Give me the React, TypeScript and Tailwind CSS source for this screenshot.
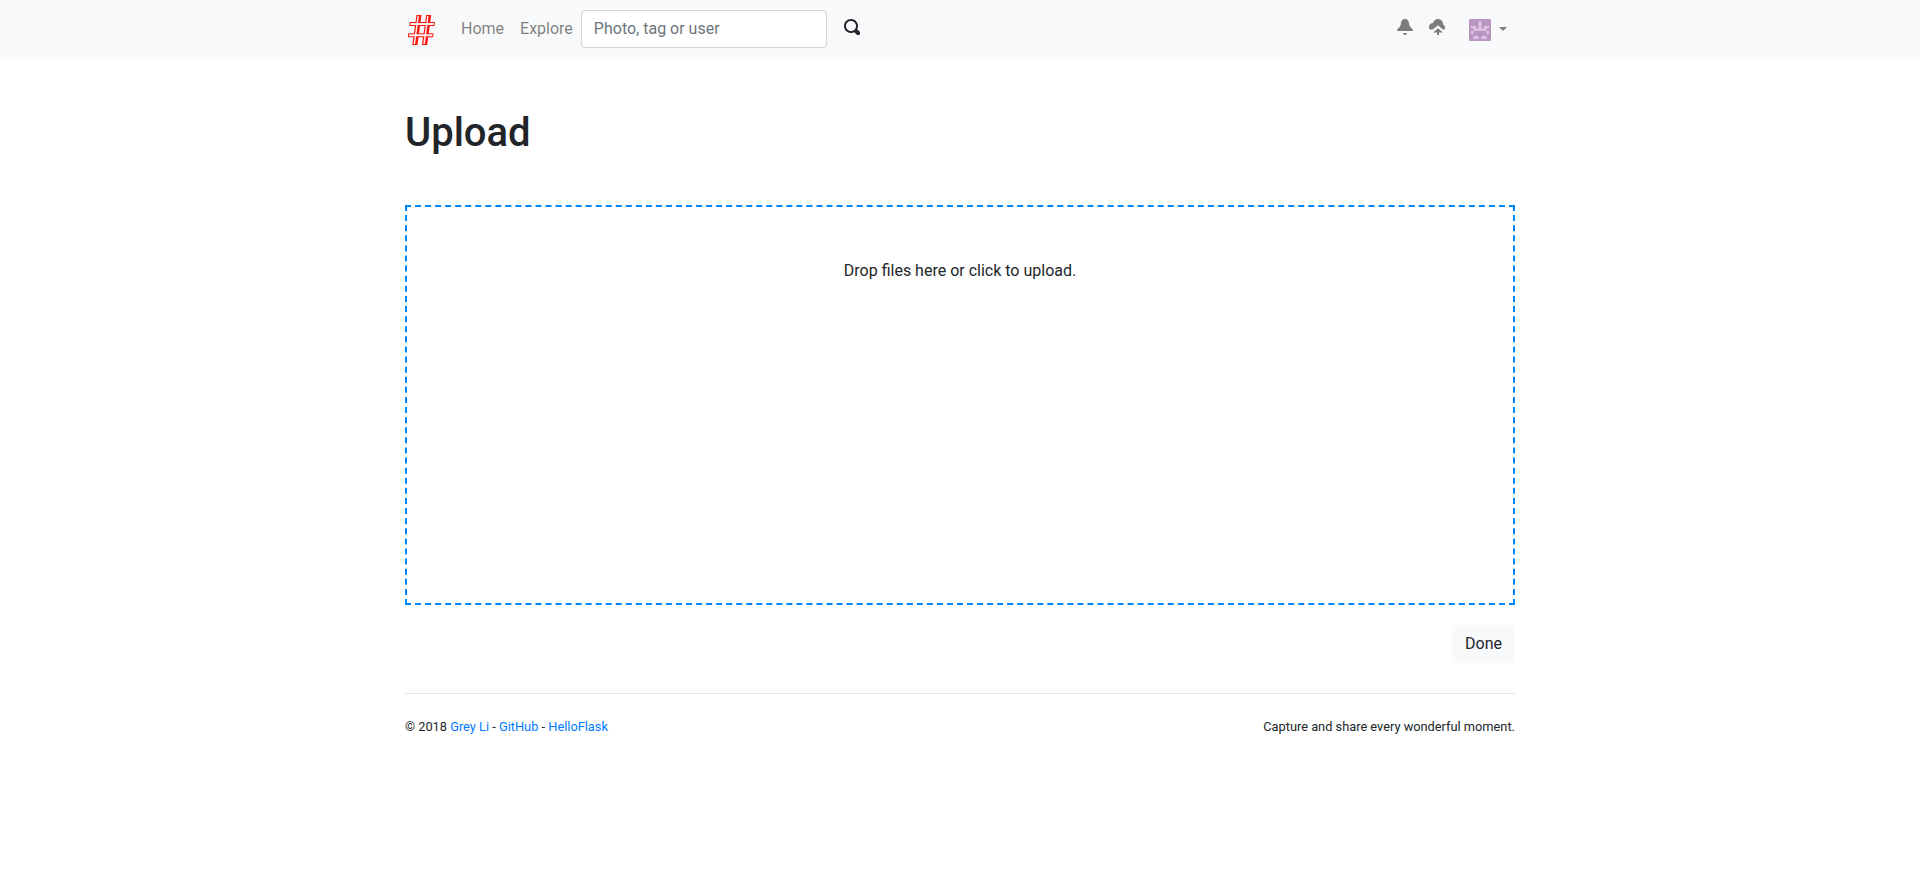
import React from "react";

const OI = {
  search:
    "M3.5 0c-1.93 0-3.5 1.57-3.5 3.5s1.57 3.5 3.5 3.5c.59 0 1.17-.14 1.66-.41a1 1 0 0 0 .13.13l1 1a1.02 1.02 0 1 0 1.44-1.44l-1-1a1 1 0 0 0-.16-.13c.27-.49.44-1.06.44-1.66 0-1.93-1.55-3.5-3.5-3.5zm0 1c1.39 0 2.5 1.11 2.5 2.5 0 .66-.24 1.27-.66 1.72l-.03.03a1 1 0 0 0-.13.13c-.44.4-1.04.63-1.69.63-1.39 0-2.5-1.11-2.5-2.5s1.11-2.5 2.5-2.5z",
  bell: "M4 0c-1.1 0-2 .9-2 2 0 1.04-.52 1.98-1.34 2.66-.41.34-.66.82-.66 1.34h8c0-.52-.24-1-.66-1.34-.82-.68-1.34-1.62-1.34-2.66 0-1.1-.89-2-2-2zm-1 7c0 .55.45 1 1 1s1-.45 1-1h-2z",
  cloud:
    "M4.5 0c-1.21 0-2.27.86-2.5 2-1.1 0-2 .9-2 2 0 .45.15.85.4 1.2h1.4l2.7-2.1 2.4 2.1h.7c.25-.2.4-.5.4-.95 0-.65-.42-1.29-1-1.5v-.25c0-1.38-1.12-2.5-2.5-2.5zm0 4.6l-2.4 2.2h1.900v1.200h1v-1.200h1.900z",
};

function Icon({ d }: { d: string }) {
  return (
    <svg className="size-4 fill-current" viewBox="0 0 8 8">
      <path d={d} />
    </svg>
  );
}

function Logo() {
  return (
    <svg className="h-[30px] w-[30px]" viewBox="0 0 30 30">
      <g fill="#fb1a12">
        <path d="M11.500 0h5l-4 30h-5.300z" />
        <path d="M21.200 0h5l-4 30h-5.300z" />
        <path d="M4.800 7H30l-.5 4H4.300z" />
        <path d="M3.300 18.300h25.200l-.5 4H2.800z" />
      </g>
      <g fill="#fff0f0">
        <path d="M12.500 1h1.400l-3.800 28h-1.500z" />
        <path d="M22.200 1h1.400l-3.800 28h-1.500z" />
        <path d="M5.700 8H29l-.3 2H5.400z" />
        <path d="M4.200 19.300h23.300l-.3 2H3.900z" />
      </g>
    </svg>
  );
}

function Avatar() {
  return (
    <svg className="size-[22px]" viewBox="0 0 22 22">
      <rect width="22" height="22" rx="1" fill="#bb95c2" />
      <path
        fill="#dfc3e6"
        d="M9.500 2h3v7.500h2.500V7h5v2.500h-2.500V12h-13V9.500H2V7h5v2.500h2.500zM2 12h2.500v3H2zM17.500 12H20v3h-2.500zM4.500 17h5v3h-5zM12.500 17h5v3h-5z"
      />
    </svg>
  );
}

export default function App() {
  return (
    <div className="min-h-screen bg-white font-['Roboto',sans-serif] text-base leading-6 text-[#212529]">
      <nav className="h-[59px] bg-[#f8f9fa] pb-px">
        <div className="mx-auto flex h-full w-[1110px] items-center">
          <a href="#" className="mr-[18px] pt-[2px]">
            <Logo />
          </a>
          <a href="#" className="px-2 text-black/50">Home</a>
          <a href="#" className="px-2 text-black/50">Explore</a>
          <form className="flex items-center">
            <input
              className="h-[38px] w-[246px] rounded border border-[#ced4da] bg-white px-3 pb-0.5 placeholder:text-[#6c757d]"
              placeholder="Photo, tag or user"
            />
            <button type="button" className="-mt-1 ml-[17px]" aria-label="Search">
              <Icon d={OI.search} />
            </button>
          </form>
          <div className="ml-auto flex items-center pr-2 text-black/50">
            <a href="#" className="-mt-1 mr-4"><Icon d={OI.bell} /></a>
            <a href="#" className="-mt-1 mr-6"><Icon d={OI.cloud} /></a>
            <a href="#" className="flex items-center">
              <span className="mt-[2px]"><Avatar /></span>
              <span className="-mt-px ml-2 border-x-[4.800px] border-t-[4.800px] border-x-transparent border-t-current" />
            </a>
          </div>
        </div>
      </nav>
      <main className="mx-auto w-[1110px] pt-[50px]">
        <h1 className="text-[40px] leading-[48px] font-medium">Upload</h1>
        <div className="mt-12 flex h-[400px] justify-center border-2 border-dashed border-[#0087f7] pt-[52px]">
          <span>Drop files here or click to upload.</span>
        </div>
        <div className="mt-5 flex justify-end">
          <button className="h-[38px] rounded border border-[#f8f9fa] bg-[#f8f9fa] px-3">Done</button>
        </div>
        <footer className="mt-[30px] flex justify-between border-t border-black/10 pt-[21px]">
          <small className="text-[12.800px]">
            © 2018 <a href="#" className="text-[#007bff]">Grey Li</a> -{" "}
            <a href="#" className="text-[#007bff]">GitHub</a> -{" "}
            <a href="#" className="text-[#007bff]">HelloFlask</a>
          </small>
          <small className="text-[12.800px]">Capture and share every wonderful moment.</small>
        </footer>
      </main>
    </div>
  );
}
